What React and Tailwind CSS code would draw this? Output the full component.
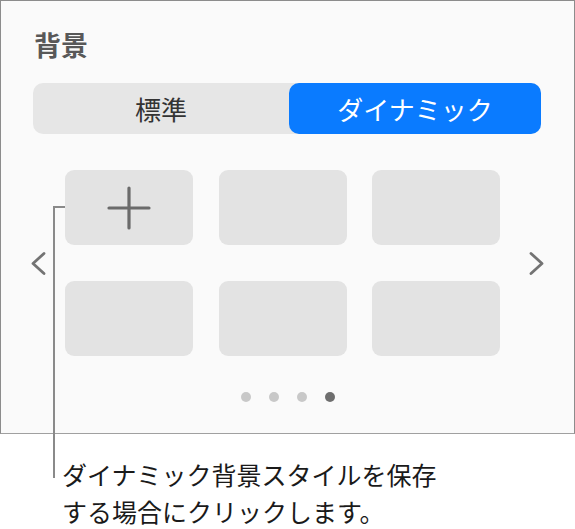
import React from 'react';

const jp = { fontFamily: '"Noto Sans CJK JP", "Noto Sans", sans-serif' };

const Chevron = ({ dir }) => (
    <svg width="15" height="23" viewBox="0 0 15 23" className="shrink-0">
        <path
            d={dir === 'left' ? 'M13 1.5 L2 11.5 L13 21.5' : 'M2 1.5 L13 11.5 L2 21.5'}
            fill="none"
            stroke="#737373"
            strokeWidth="2.8"
            strokeLinecap="round"
            strokeLinejoin="round"
        />
    </svg>
);

const Tile = ({ children }) => (
    <div className="h-[75px] rounded-[9px] bg-[#e3e3e3] flex items-center justify-center">{children}</div>
);

const App = () => {
    return (
        <div className="relative w-[575px] h-[529px] bg-white" style={jp}>
            <div className="h-[434px] border border-[#8c8c8c] border-b-[#a0a0a0] bg-[#fafafa] pt-[28px]">
                <div className="pl-[33px] h-[32px] leading-[32px] text-[27px] font-bold text-[#585858]">背景</div>

                <div className="mt-[22px] ml-[32px] w-[508px] h-[51px] rounded-[10px] bg-[#e6e6e6] flex">
                    <div className="flex-1 flex items-center justify-center text-[26px] text-[#333]">標準</div>
                    <div className="w-[252px] rounded-[10px] bg-[#0a7bff] flex items-center justify-center text-[26px] text-white">ダイナミック</div>
                </div>

                <div className="mt-[36px] flex items-center">
                    <div className="ml-[30px]"><Chevron dir="left" /></div>
                    <div className="ml-[19px] grid grid-cols-[128px_128px_128px] gap-x-[25.5px] gap-y-[36px]">
                        <Tile>
                            <svg width="44" height="44" viewBox="0 0 44 44">
                                <path d="M22 2 V42 M2 22 H42" stroke="#6b6b6b" strokeWidth="3.2" strokeLinecap="round" />
                            </svg>
                        </Tile>
                        <Tile />
                        <Tile />
                        <Tile />
                        <Tile />
                        <Tile />
                    </div>
                    <div className="ml-[29px]"><Chevron dir="right" /></div>
                </div>

                <div className="mt-[36px] flex justify-center gap-[18px]">
                    <span className="w-[10px] h-[10px] rounded-full bg-[#c8c8c8]" />
                    <span className="w-[10px] h-[10px] rounded-full bg-[#c8c8c8]" />
                    <span className="w-[10px] h-[10px] rounded-full bg-[#c8c8c8]" />
                    <span className="w-[10px] h-[10px] rounded-full bg-[#6e6e6e]" />
                </div>
            </div>

            <div className="mt-[22px] pl-[62px] text-[25px] leading-[37px] text-[#1a1a1a]">
                <div>ダイナミック背景スタイルを保存</div>
                <div>する場合にクリックします。</div>
            </div>

            {/* callout line */}
            <div className="absolute left-[53px] top-[206px] w-[12px] h-[2px] bg-[#8a8a8a]" />
            <div className="absolute left-[53px] top-[206px] w-[2px] h-[272px] bg-[#8a8a8a]" />
        </div>
    );
};

export default App;
